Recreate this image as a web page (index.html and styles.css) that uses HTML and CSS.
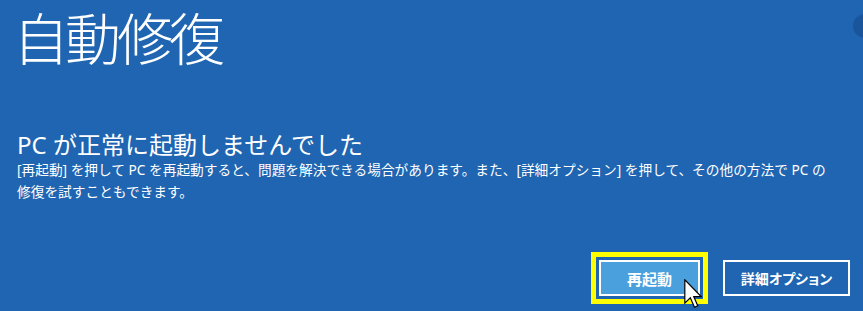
FILE: index.html
```html
<!DOCTYPE html>
<html lang="ja">
<head>
<meta charset="utf-8">
<title>自動修復</title>
<link rel="stylesheet" href="styles.css">
</head>
<body>
<main class="screen">
  <h1 class="title">自動修復</h1>
  <section class="message">
    <h2 class="headline">PC が正常に起動しませんでした</h2>
    <p class="detail">[再起動] を押して PC を再起動すると、問題を解決できる場合があります。また、[詳細オプション] を押して、その他の方法で PC の修復を試すこともできます。</p>
  </section>
  <div class="actions">
    <div class="focus-ring"><button class="btn btn-primary" type="button">再起動</button></div>
    <button class="btn" type="button">詳細オプション</button>
  </div>
  <svg class="cursor" width="18" height="29" viewBox="0 0 12 19.5" aria-hidden="true">
    <path d="M0.5 0.5 L0.5 16.2 L4.2 12.6 L7 19 L9.2 18 L6.5 11.8 L11.5 11.8 Z" fill="#ffffff" stroke="#000000" stroke-width="0.8" stroke-linejoin="miter"/>
  </svg>
  <div class="edge-shade"></div>
</main>
</body>
</html>
```
FILE: styles.css
```css
html, body {
  margin: 0;
  padding: 0;
}
body {
  background: #1f65b1;
  color: #ffffff;
  font-family: "Noto Sans", "Noto Sans CJK JP", sans-serif;
  overflow: hidden;
}
.screen {
  position: relative;
  box-sizing: border-box;
  width: 863px;
  height: 311px;
  padding: 0 13px 0 17px;
  display: flex;
  flex-direction: column;
}
.title {
  margin: 0 0 0 -4px;
  padding: 9px 4px 0 0;
  align-self: flex-start;
  font-family: "Liberation Sans", "Noto Sans CJK JP", sans-serif;
  font-weight: 300;
  font-size: 56px;
  line-height: 64px;
  letter-spacing: -4px;
}
.message {
  margin-top: 58px;
}
.headline {
  margin: 0;
  font-family: "Noto Sans", "Noto Sans CJK JP", sans-serif;
  font-weight: 400;
  font-size: 24px;
  line-height: 28px;
}
.detail {
  margin: 0;
  font-family: "Noto Sans", "Noto Sans CJK JP", sans-serif;
  font-size: 13.7px;
  line-height: 22px;
  max-width: 818px;
}
.actions {
  margin-top: auto;
  margin-bottom: 7px;
  display: flex;
  justify-content: flex-end;
  align-items: center;
  gap: 15px;
}
.focus-ring {
  border: 5px solid #ffff00;
  padding: 3px;
  display: flex;
}
.btn {
  box-sizing: border-box;
  height: 36px;
  width: 127px;
  margin: 0;
  padding: 0;
  border: 2px solid #ffffff;
  background: #1f65b1;
  color: #ffffff;
  font-family: "Noto Sans CJK JP", sans-serif;
  font-weight: 700;
  font-size: 14px;
  font-feature-settings: "palt";
  cursor: default;
}
.btn-primary {
  width: 101px;
  background: #4aa0dc;
  font-size: 15px;
}
.cursor {
  position: absolute;
  left: 684px;
  top: 279px;
}
.edge-shade {
  position: absolute;
  right: -14px;
  top: 14px;
  width: 24px;
  height: 24px;
  border-radius: 50%;
  background: rgba(10, 40, 90, 0.25);
}
```
